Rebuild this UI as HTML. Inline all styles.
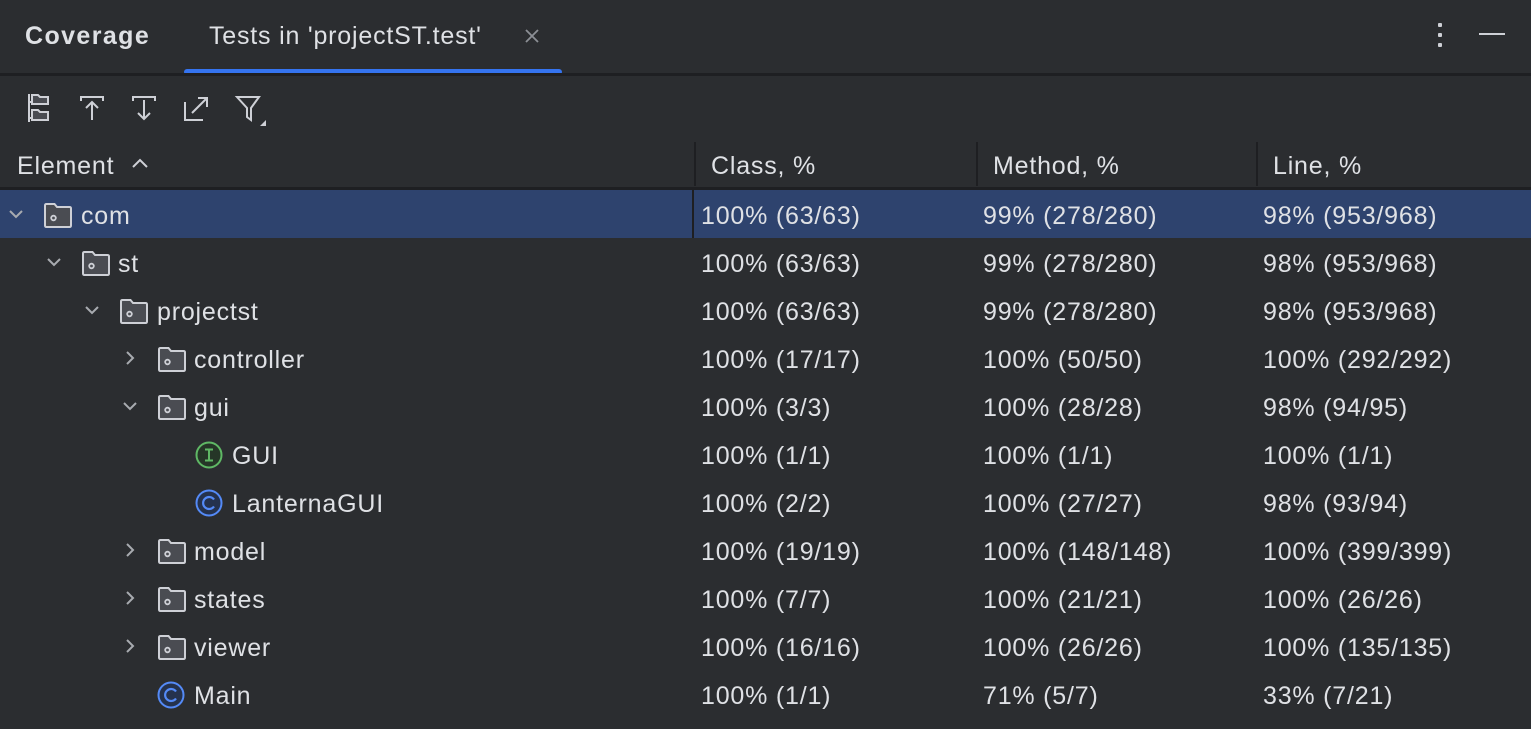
<!DOCTYPE html>
<html><head><meta charset="utf-8"><style>
body{margin:0;width:1531px;height:729px;background:#2b2d30;font-family:"Liberation Sans",sans-serif;color:#dfe1e5;overflow:hidden;position:relative}
.a{position:absolute}
.t{font-size:25px;letter-spacing:0.8px;line-height:48px;white-space:nowrap}
.row{position:absolute;left:0;width:1531px;height:48px}
.row .t{position:absolute;top:2px}
svg{position:absolute}
</style></head><body>
<div class="a t" style="left:25px;top:12px;font-weight:bold;letter-spacing:1.4px">Coverage</div>
<div class="a t" style="left:209px;top:12px">Tests in 'projectST.test'</div>
<svg style="left:523px;top:27px" width="18" height="18" viewBox="0 0 18 18"><path d="M3 3L15 15M15 3L3 15" stroke="#8c8f95" stroke-width="1.8"/></svg>
<div class="a" style="left:184px;top:69px;width:378px;height:6px;border-radius:3px;background:#3574f0"></div>
<div class="a" style="left:0;top:73px;width:1531px;height:3px;background:#1e1f22"></div>
<div class="a" style="left:1438px;top:23px;width:4px;height:4px;background:#ced0d6;border-radius:1px"></div>
<div class="a" style="left:1438px;top:33px;width:4px;height:4px;background:#ced0d6;border-radius:1px"></div>
<div class="a" style="left:1438px;top:43px;width:4px;height:4px;background:#ced0d6;border-radius:1px"></div>
<div class="a" style="left:1479px;top:33px;width:26px;height:2px;background:#ced0d6"></div>
<!-- toolbar -->
<svg style="left:26px;top:92px" width="28" height="32" viewBox="0 0 28 32" fill="none" stroke="#ced0d6" stroke-width="2"><path d="M3 2V30M3 10H6M3 26H6"/><path d="M6 3h6l2 2h8v7H6z" fill="#4a4c52"/><path d="M6 18h6l2 2h8v8H6z" fill="#4a4c52"/></svg>
<svg style="left:78px;top:94px" width="28" height="28" viewBox="0 0 28 28" fill="none" stroke="#ced0d6" stroke-width="2"><path d="M3 7V3H25V7M14 26V8M8 14L14 8L20 14"/></svg>
<svg style="left:130px;top:94px" width="28" height="28" viewBox="0 0 28 28" fill="none" stroke="#ced0d6" stroke-width="2"><path d="M3 7V3H25V7M14 6V25M8 19L14 25L20 19"/></svg>
<svg style="left:182px;top:94px" width="28" height="28" viewBox="0 0 28 28" fill="none" stroke="#ced0d6" stroke-width="2"><path d="M3 8V26H21M10 19L25 4M16 4H25V13"/></svg>
<svg style="left:234px;top:94px" width="34" height="34" viewBox="0 0 34 34" fill="none" stroke="#ced0d6" stroke-width="2"><path d="M3 3H25L17 14V26L13 23V14Z"/><path d="M32 26V32H26Z" fill="#ced0d6" stroke="none"/></svg>
<!-- header -->
<div class="a t" style="left:17px;top:142px">Element</div>
<svg style="left:130px;top:156px" width="20" height="14" viewBox="0 0 20 14" fill="none" stroke="#ced0d6" stroke-width="2"><path d="M3 11L10 4L17 11"/></svg>
<div class="a t" style="left:711px;top:142px">Class, %</div>
<div class="a t" style="left:993px;top:142px">Method, %</div>
<div class="a t" style="left:1273px;top:142px">Line, %</div>
<div class="a" style="left:694px;top:142px;width:2px;height:44px;background:#1e1f22"></div>
<div class="a" style="left:976px;top:142px;width:2px;height:44px;background:#1e1f22"></div>
<div class="a" style="left:1256px;top:142px;width:2px;height:44px;background:#1e1f22"></div>
<div class="a" style="left:0;top:187px;width:1531px;height:3px;background:#1e1f22"></div>

<svg width="0" height="0" style="position:absolute"><defs>
<g id="fold"><path d="M1 3.5Q1 2 2.5 2H10.5L13 5H25.5Q27 5 27 6.5V23.5Q27 25 25.5 25H2.5Q1 25 1 23.5Z" fill="#4a4c52" stroke="#ced0d6" stroke-width="2"/><circle cx="9.5" cy="16" r="2.3" fill="none" stroke="#ced0d6" stroke-width="1.8"/></g>
<path id="down" d="M3 6L9 12L15 6" fill="none" stroke="#a8abb0" stroke-width="2"/>
<path id="right" d="M6 3L12 9L6 15" fill="none" stroke="#a8abb0" stroke-width="2"/>
</defs></svg>

<div class="row" style="top:190px;background:#2e436e">
<div class="a" style="left:692px;top:0;width:2px;height:48px;background:#1e1f22"></div>
<svg style="left:7px;top:15px" width="18" height="18"><use href="#down"/></svg>
<svg style="left:44px;top:12px" width="28" height="26"><use href="#fold"/></svg>
<div class="t" style="left:81px">com</div><div class="t" style="left:701px">100% (63/63)</div><div class="t" style="left:983px">99% (278/280)</div><div class="t" style="left:1263px">98% (953/968)</div></div>

<div class="row" style="top:238px">
<svg style="left:45px;top:15px" width="18" height="18"><use href="#down"/></svg>
<svg style="left:82px;top:12px" width="28" height="26"><use href="#fold"/></svg>
<div class="t" style="left:118px">st</div><div class="t" style="left:701px">100% (63/63)</div><div class="t" style="left:983px">99% (278/280)</div><div class="t" style="left:1263px">98% (953/968)</div></div>

<div class="row" style="top:286px">
<svg style="left:83px;top:15px" width="18" height="18"><use href="#down"/></svg>
<svg style="left:120px;top:12px" width="28" height="26"><use href="#fold"/></svg>
<div class="t" style="left:157px">projectst</div><div class="t" style="left:701px">100% (63/63)</div><div class="t" style="left:983px">99% (278/280)</div><div class="t" style="left:1263px">98% (953/968)</div></div>

<div class="row" style="top:334px">
<svg style="left:121px;top:15px" width="18" height="18"><use href="#right"/></svg>
<svg style="left:158px;top:12px" width="28" height="26"><use href="#fold"/></svg>
<div class="t" style="left:194px">controller</div><div class="t" style="left:701px">100% (17/17)</div><div class="t" style="left:983px">100% (50/50)</div><div class="t" style="left:1263px">100% (292/292)</div></div>

<div class="row" style="top:382px">
<svg style="left:121px;top:15px" width="18" height="18"><use href="#down"/></svg>
<svg style="left:158px;top:12px" width="28" height="26"><use href="#fold"/></svg>
<div class="t" style="left:194px">gui</div><div class="t" style="left:701px">100% (3/3)</div><div class="t" style="left:983px">100% (28/28)</div><div class="t" style="left:1263px">98% (94/95)</div></div>

<div class="row" style="top:430px">
<svg style="left:195px;top:11px" width="28" height="28" viewBox="0 0 28 28"><circle cx="14" cy="14" r="12.5" fill="#253627" stroke="#5fb865" stroke-width="2"/><path d="M10 8.5H18M10 19.5H18M14 8.5V19.5" stroke="#5fb865" stroke-width="2"/></svg>
<div class="t" style="left:232px">GUI</div><div class="t" style="left:701px">100% (1/1)</div><div class="t" style="left:983px">100% (1/1)</div><div class="t" style="left:1263px">100% (1/1)</div></div>

<div class="row" style="top:478px">
<svg style="left:195px;top:11px" width="28" height="28" viewBox="0 0 28 28"><circle cx="14" cy="14" r="12.5" fill="#25324d" stroke="#548af7" stroke-width="2"/><path d="M19 10.5A6 6 0 1 0 19 17.5" fill="none" stroke="#548af7" stroke-width="2.2"/></svg>
<div class="t" style="left:232px">LanternaGUI</div><div class="t" style="left:701px">100% (2/2)</div><div class="t" style="left:983px">100% (27/27)</div><div class="t" style="left:1263px">98% (93/94)</div></div>

<div class="row" style="top:526px">
<svg style="left:121px;top:15px" width="18" height="18"><use href="#right"/></svg>
<svg style="left:158px;top:12px" width="28" height="26"><use href="#fold"/></svg>
<div class="t" style="left:194px">model</div><div class="t" style="left:701px">100% (19/19)</div><div class="t" style="left:983px">100% (148/148)</div><div class="t" style="left:1263px">100% (399/399)</div></div>

<div class="row" style="top:574px">
<svg style="left:121px;top:15px" width="18" height="18"><use href="#right"/></svg>
<svg style="left:158px;top:12px" width="28" height="26"><use href="#fold"/></svg>
<div class="t" style="left:194px">states</div><div class="t" style="left:701px">100% (7/7)</div><div class="t" style="left:983px">100% (21/21)</div><div class="t" style="left:1263px">100% (26/26)</div></div>

<div class="row" style="top:622px">
<svg style="left:121px;top:15px" width="18" height="18"><use href="#right"/></svg>
<svg style="left:158px;top:12px" width="28" height="26"><use href="#fold"/></svg>
<div class="t" style="left:194px">viewer</div><div class="t" style="left:701px">100% (16/16)</div><div class="t" style="left:983px">100% (26/26)</div><div class="t" style="left:1263px">100% (135/135)</div></div>

<div class="row" style="top:670px">
<svg style="left:157px;top:11px" width="28" height="28" viewBox="0 0 28 28"><circle cx="14" cy="14" r="12.5" fill="#25324d" stroke="#548af7" stroke-width="2"/><path d="M19 10.5A6 6 0 1 0 19 17.5" fill="none" stroke="#548af7" stroke-width="2.2"/></svg>
<div class="t" style="left:194px">Main</div><div class="t" style="left:701px">100% (1/1)</div><div class="t" style="left:983px">71% (5/7)</div><div class="t" style="left:1263px">33% (7/21)</div></div>
</body></html>
